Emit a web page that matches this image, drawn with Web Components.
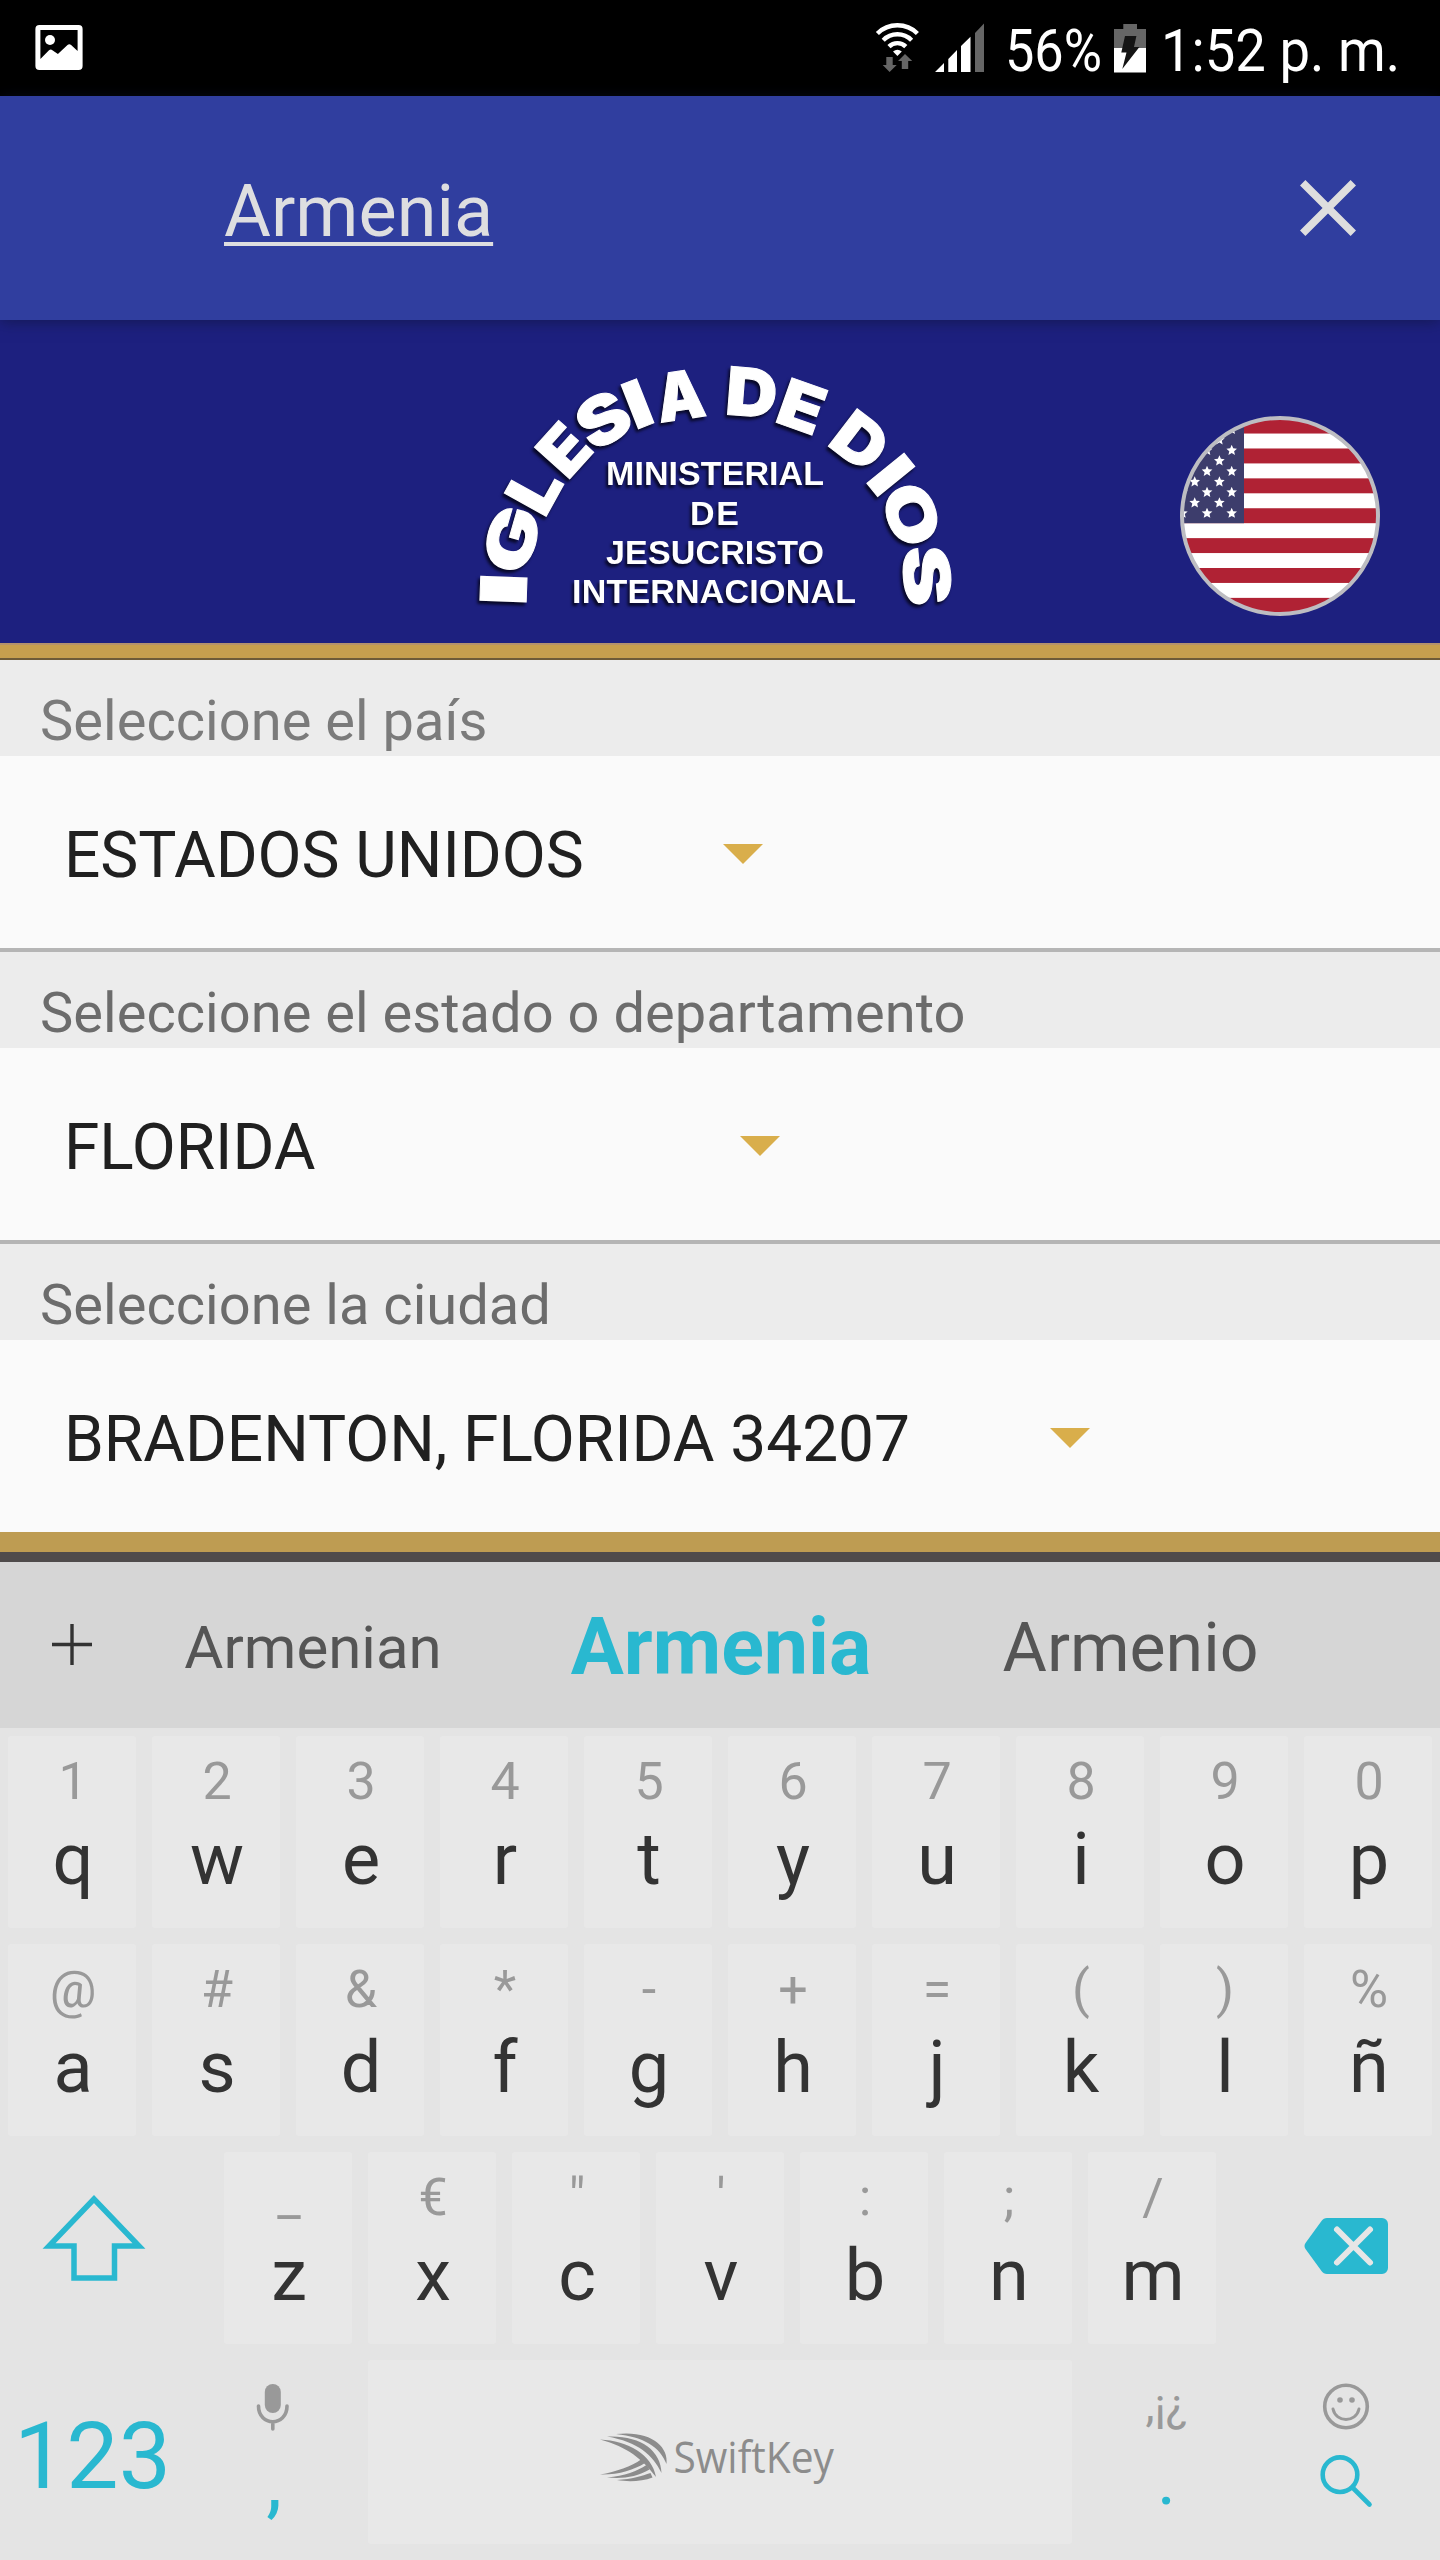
<!DOCTYPE html>
<html lang="es">
<head>
<meta charset="utf-8">
<title>Iglesia de Dios</title>
<style>
body{margin:0;width:1440px;background:#e4e4e4;font-family:Roboto,"Liberation Sans",sans-serif}
</style>
</head>
<body>
<phone-screen></phone-screen>
<script>
const define = (name, css, html, setup) => customElements.define(name, class extends HTMLElement {
  connectedCallback() {
    if (this.shadowRoot) return;
    const root = this.attachShadow({ mode: 'open' });
    const body = typeof html === 'function' ? html(this) : html;
    root.innerHTML = `<style>:host{display:block;box-sizing:border-box}*{box-sizing:border-box}svg{display:block;flex:none}${css}</style>${body}`;
    if (setup) setup(root, this);
  }
});

define('status-bar', ':host{height:96px;background:#000}', `
<svg width="1440" height="96" viewBox="0 0 1440 96" fill="#fff">
  <path fill-rule="evenodd" d="M39.4 25H78.6a4 4 0 0 1 4 4V66a4 4 0 0 1-4 4H39.4a4 4 0 0 1-4-4V29a4 4 0 0 1 4-4ZM40.4 30V59L49 50.3q1.8-1.6 3.4 0L57.9 54 67.5 45q1.8-1.6 3.6 0L77.6 51V30Z"/>
  <circle cx="50" cy="40" r="5"/>
  <g fill="none" stroke="#fff" stroke-width="4.4">
    <path d="M877.4 33.5a28.5 28.5 0 0 1 40 0"/>
    <path d="M883.2 40.2a20 20 0 0 1 28.4 0"/>
    <path d="M889 46.6a11.8 11.8 0 0 1 16.8 0"/>
  </g>
  <path d="M893 51.5q4.4-3.4 8.8 0L897.4 56Z"/>
  <g fill="#666"><path d="M886.3 57h6.4v8h4L889.6 72l-6.9-7h3.6Z"/><path d="M901.8 69h6.4v-8h4L905 54l-7 7h3.8Z"/></g>
  <path d="M935 72L944 63V72ZM948.3 72V59L957 50V72ZM961 72V46L970.5 36.800V72Z"/>
  <path fill="#666" d="M975 72V33L984 23.500V72Z"/>
  <text x="1005" y="71" font-size="60" textLength="97" lengthAdjust="spacingAndGlyphs">56%</text>
  <path fill="#666" d="M1114 29H1123.300V24H1137V29H1146V48H1114Z"/>
  <path d="M1114 48H1146V72.500H1114Z"/>
  <path fill="#141414" d="M1125 36H1136.400L1134 47H1139.400L1122.300 69 1126.500 52.500H1121.300Z"/>
  <text x="1161" y="71" font-size="60" textLength="239" lengthAdjust="spacingAndGlyphs">1:52 p. m.</text>
</svg>`);

define('search-bar', `
:host{height:224px;background:#303e9f;display:flex;justify-content:space-between;padding:0 84px 0 224px;color:#dedee0;position:relative;z-index:1;box-shadow:0 2px 14px rgba(15,20,50,.55)}
span{font-size:72px;line-height:217px;padding-top:7px;text-decoration:underline;text-decoration-thickness:4px;text-underline-offset:6px;text-decoration-skip-ink:none}
svg{margin-top:84px}`, `
<span>Armenia</span>
<svg width="56" height="56" viewBox="0 0 56 56" stroke="#dedede" stroke-width="7.6"><path d="M2.700 2.700 53.300 53.300M53.300 2.700 2.700 53.300"/></svg>`);

/* Arched title: centre of every glyph, its turn in degrees, ink width and ink height. */
const ARCH = [['I',503.6,589,-88,23.5,46],['G',511.8,539.3,-74,61,49],['L',534.3,488.8,-61,36.500,47.5],['E',564.6,449.5,-48,37,47],['S',602.9,419.7,-32,48,50],['I',637.5,404,-21.5,16.5,47],['A',680.4,395.5,-8.5,46.500,48],['D',752.3,392.3,4.5,46,48],['E',802.4,406.7,19.5,39,47],['D',860.8,441.7,37.5,46,47],['I',890.7,475,51,17,47.5],['O',911.4,514.8,68,58.500,49],['S',926.8,575.3,85,57,48]];

define('church-emblem', `
:host{width:500px;height:323px}
svg{overflow:visible}
text{fill:#fff}
g{filter:drop-shadow(-2px 3px 1.500px rgba(0,0,10,.75))}
.arch{font:900 65px Inter,Roboto,sans-serif;stroke:#fff;stroke-width:1px}
.in{font:bold 34px "Liberation Sans",Arial,sans-serif}`, () => {
  const ctx = document.createElement('canvas').getContext('2d');
  ctx.font = '900 65px Inter, Roboto, sans-serif';
  const glyphs = ARCH.map(([ch, cx, cy, deg, w, h]) => {
    const m = ctx.measureText(ch), l = m.actualBoundingBoxLeft, r = m.actualBoundingBoxRight,
      u = m.actualBoundingBoxAscent, d = m.actualBoundingBoxDescent;
    return `<text class="arch" x="${((l - r) / 2).toFixed(2)}" y="${((u - d) / 2).toFixed(2)}" transform="translate(${cx} ${cy}) rotate(${deg}) scale(${(w / (l + r)).toFixed(3)} ${(h / (u + d)).toFixed(3)})">${ch}</text>`;
  }).join('');
  return `<svg width="500" height="323" viewBox="465 320 500 323"><g>${glyphs}
<text class="in" x="606" y="484.500" textLength="218">MINISTERIAL</text>
<text class="in" x="690" y="524.500" textLength="49">DE</text>
<text class="in" x="606" y="563.500" textLength="218">JESUCRISTO</text>
<text class="in" x="572" y="603" textLength="284">INTERNACIONAL</text>
</g></svg>`;
});

const star = (x, y, r) => {
  let p = '';
  for (let i = 0; i < 10; i++) {
    const a = Math.PI * (i / 5 - .5), k = i % 2 ? r * .46 : r;
    p += (x + k * Math.cos(a)).toFixed(1) + ',' + (y + k * Math.sin(a)).toFixed(1) + ' ';
  }
  return `<polygon points="${p}"/>`;
};
define('country-flag', ':host{width:200px;height:200px}', () => {
  let stripes = '', stars = '';
  for (let i = 0; i < 7; i++) stripes += `<rect x="0" y="${2.600 + i * 29.880}" width="200" height="14.940"/>`;
  for (let r = 0; r < 10; r++) for (let c = r % 2; c < 5; c += 2) stars += star(51.700 - c * 12.330, 97.300 - r * 10.480, 5.600);
  return `<svg width="200" height="200" viewBox="0 0 200 200"><defs><clipPath id="c"><circle cx="100" cy="100" r="98"/></clipPath></defs>
  <g clip-path="url(#c)"><rect width="200" height="200" fill="#fff"/><g fill="#b02234">${stripes}</g><rect width="64" height="107.200" fill="#3d3d6c"/><g fill="#fff">${stars}</g></g>
  <circle cx="100" cy="100" r="98" fill="none" stroke="#bdbdc2" stroke-width="4"/></svg>`;
});

define('app-banner', `
:host{height:340px;background:#1d207f;display:flex;flex-direction:column}
.row{height:323px;display:flex;padding-left:465px}
country-flag{margin:96px 0 0 215px}
.gold{height:17px;background:#c79f4e;border-top:2px solid #b4926c;border-bottom:2px solid #6f5b38}`, `
<div class="row"><church-emblem></church-emblem><country-flag></country-flag></div><div class="gold"></div>`);

define('select-field', `
:host{height:288px;background:#fafafa;color:#202020}
:host([divided]){height:292px;border-bottom:4px solid #b5b5b5}
label{display:block;height:96px;background:#ececec;padding:26px 0 0 40px;font-size:56px;line-height:70px;color:var(--label,#6c6c6c);letter-spacing:.03px}
div{height:192px;padding:7px 0 0;margin-left:64px;width:var(--w);display:flex;justify-content:space-between;align-items:flex-start;font-size:64px;line-height:186px;letter-spacing:-.05px;white-space:nowrap}
svg{margin-top:81px}`, el => `
<label>${el.getAttribute('label')}</label>
<div><slot></slot><svg width="40" height="20" viewBox="0 0 40 20"><path fill="#d9ae4b" d="M0 0H40L20 20Z"/></svg></div>`);

define('word-suggestions', `
:host{height:166px;background:#d6d6d6;display:grid;grid-template-columns:145px 336px 480px 339px;color:#555;text-align:center;line-height:161px}
span{padding-top:5px}
.a{font-size:60px}.b{font-size:79px;font-weight:700;color:#29b8d0}.c{font-size:68px;padding-top:6px}`, `
<svg width="144" height="166" viewBox="0 0 144 166" stroke="#333" stroke-width="3.400"><path d="M52 82.500H92M72 62V103"/></svg>
<span class="a">Armenian</span><span class="b">Armenia</span><span class="c">Armenio</span>`);

define('letter-key', `
:host{width:128px;height:192px;margin:0 8px;background:#e8e8e8;border-radius:3px;color:#333;text-align:center;padding:20px 0 0 2px}
div{font-size:72px;line-height:72px}
.h{font-size:52px;line-height:52px;color:#999;margin-bottom:16px}`, el => `
<div class="h">${el.getAttribute('hint')}</div><div><slot></slot></div>`);

const keys = (letters, hints) => [...letters].map((l, i) =>
  `<letter-key hint="${hints[i].replace('&', '&amp;').replace('"', '&quot;')}">${l}</letter-key>`).join('');

define('swift-keyboard', `
:host{height:832px;background:#e4e4e4;padding-top:8px}
.row{display:flex;height:208px}
.bottom{display:flex;height:200px;color:#29b8d0;text-align:center}
.num{width:186px;font-size:93px;line-height:94px;padding:50px 1px 0 0}
.cell{width:174px;font-size:72px;line-height:72px;margin-top:-8px;height:208px}
.cell .comma{font-size:80px;padding:3px 0 0 2px}
.dot{width:172px;padding-left:1px}
.top{height:91px}
.alt{height:92px;font-size:46px;line-height:46px;padding-top:30px;color:#999}
.space{width:704px;height:184px;margin:0 8px;background:#e8e8e8;border-radius:3px}
.enter{margin-top:-8px}`, `
<div class="row">${keys('qwertyuiop', '1234567890')}</div>
<div class="row">${keys('asdfghjklñ', '@#&*-+=()%')}</div>
<div class="row">
  <svg width="216" height="208" viewBox="0 2152 216 208" fill="none" stroke="#29b8d0" stroke-width="5.500"><path d="M94 2199 49 2246H74V2278H114.500V2246H139Z"/></svg>
  ${keys('zxcvbnm', '_€"\':;/')}
  <svg width="216" height="208" viewBox="1224 2152 216 208"><path fill="#29b8d0" d="M1327 2218H1382a6 6 0 0 1 6 6V2268a6 6 0 0 1-6 6H1327q-3.500 0-5.500-3L1305.500 2249q-2-3 0-6L1321.500 2221q2-3 5.500-3Z"/><path stroke="#e6e6e6" stroke-width="6" stroke-linecap="round" d="M1337 2229.500 1370 2262.500M1370 2229.500 1337 2262.500"/></svg>
</div>
<div class="bottom">
  <div class="num">123</div>
  <div class="cell"><svg class="top" width="174" height="91" viewBox="186 2352 174 91"><rect x="264.800" y="2384" width="16" height="29" rx="8" fill="#999"/><path fill="none" stroke="#999" stroke-width="3.600" stroke-linecap="round" d="M258.500 2406C258.500 2427 287 2427 287 2406M272.800 2422V2429"/></svg><div class="comma">,</div></div>
  <div class="space"><svg width="704" height="184" viewBox="368 2360 704 184" fill="#8c8c8c">
    <path d="M600 2439.500C628 2441 652 2454 656 2477C642 2459 628 2447 600 2439.500Z"/>
    <path d="M607 2436.500C640 2435 661 2450 661.500 2473C653 2455 638 2442 607 2436.500Z"/>
    <path d="M616 2434C650 2430 669 2446 666.500 2464C660 2447 644 2437 616 2434Z"/>
    <path d="M600 2474.500C616 2472 632 2466 641 2459.500L645 2463C634 2470 618 2475 600 2474.500Z"/>
    <path d="M607 2477.500C625 2476 637 2471 646.500 2465L649.500 2469.500C637 2477 623 2479 607 2477.500Z"/>
    <path d="M617 2480C632 2479 642 2476 650.500 2473L652.500 2477.500C642 2481.500 628 2482 617 2480Z"/>
    <text x="673.500" y="2473" font-family="Open Sans,Noto Sans,sans-serif" font-size="43" textLength="160.500" lengthAdjust="spacingAndGlyphs">SwiftKey</text></svg></div>
  <div class="cell dot"><div class="alt">,¡¿</div>.</div>
  <svg class="enter" width="188" height="208" viewBox="1252 2352 188 208" fill="none" stroke-linecap="round"><g stroke="#999" stroke-width="3.600"><circle cx="1346" cy="2406.500" r="21.300"/><path stroke-width="3" d="M1333 2409C1336 2423 1356 2423 1359 2409"/></g><g fill="#999"><circle cx="1340" cy="2400" r="2.800"/><circle cx="1352" cy="2400" r="2.800"/></g><g stroke="#29b8d0" stroke-width="4.600"><circle cx="1340" cy="2474.700" r="17.300"/><path d="M1353 2488 1369.500 2504.500"/></g></svg>
</div>`);

define('phone-screen', `
:host{width:1440px;height:2560px;overflow:hidden}
.gold{height:20px;background:#be9c52}.dark{height:10px;background:#4f4b4b}`, `
<status-bar></status-bar><search-bar></search-bar><app-banner></app-banner>
<select-field divided label="Seleccione el país" style="--w:699px;--label:#7b7b7b">ESTADOS UNIDOS</select-field>
<select-field divided label="Seleccione el estado o departamento" style="--w:716px">FLORIDA</select-field>
<select-field label="Seleccione la ciudad" style="--w:1026px">BRADENTON, FLORIDA 34207</select-field>
<div class="gold"></div><div class="dark"></div>
<word-suggestions></word-suggestions><swift-keyboard></swift-keyboard>`);
</script>
</body>
</html>
